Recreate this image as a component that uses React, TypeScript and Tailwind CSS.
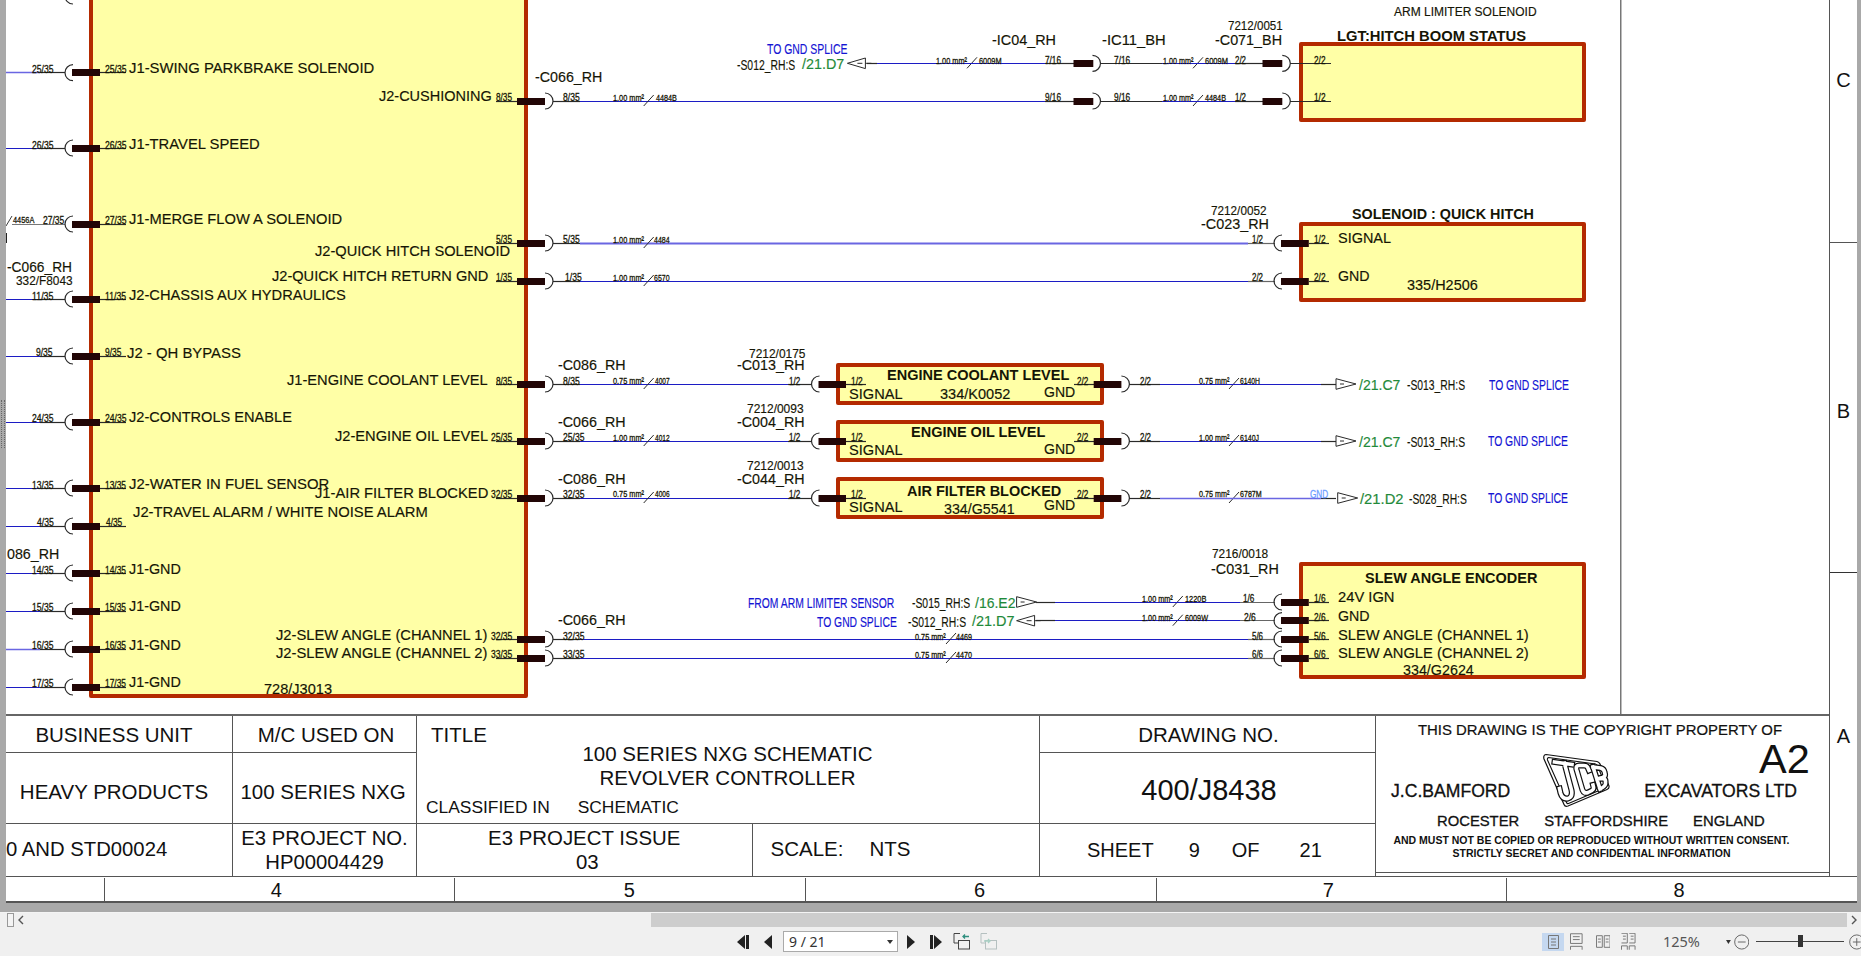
import React from "react";

const ctx = document.createElement("canvas").getContext("2d")!;
const BLUE = "#1c1cc4";
const SOFT = "#6a66e2";
const DARK = "#2a2a2a";
const GREEN = "#1f8a3a";
const TEXTBLUE = "#1414d4";

type Lab = [string, number, number, number, number, string?, boolean?];

function Label({ d }: { d: Lab }) {
  const [t, a, b, y, fs, c, bold] = d;
  ctx.font = `${bold ? "bold " : ""}${fs}px "Liberation Sans"`;
  const w = ctx.measureText(t).width || 1;
  const color = c || "#151505";
  return (
    <span
      className="absolute whitespace-nowrap leading-none origin-left"
      style={{
        left: a - 6,
        top: y - fs / 2,
        fontSize: fs,
        color,
        fontWeight: bold ? 700 : 400,
        transform: `scaleX(${(b - a) / w})`,
        WebkitTextStroke: bold ? undefined : `${fs < 12 ? 0.3 : 0.15}px ${color}`,
      }}
    >
      {t}
    </span>
  );
}

const P = 11;
const M = 9.5;
const T = 14;
const labels: Lab[] = [
  // left pins outer / inner
  ["25/35", 32.4, 53.8, 69.3, P], ["25/35", 105, 126.5, 69.3, P],
  ["26/35", 32.4, 53.8, 145, P], ["26/35", 105, 126.5, 145, P],
  ["27/35", 42.7, 64, 220, P], ["27/35", 105, 126.5, 220, P], ["4456A", 13.4, 34.8, 220, M],
  ["11/35", 32.4, 53.8, 296, P], ["11/35", 105, 126, 296, P],
  ["9/35", 35.6, 52.2, 352.3, P], ["9/35", 105, 121.4, 352.3, P],
  ["24/35", 32.4, 53.8, 418, P], ["24/35", 105, 126.5, 418, P],
  ["13/35", 32.4, 53.8, 485, P], ["13/35", 105, 126, 485, P],
  ["4/35", 37, 53.8, 522.3, P], ["4/35", 105.6, 121.8, 522.3, P],
  ["14/35", 32.4, 53.8, 570, P], ["14/35", 105, 126, 570, P],
  ["15/35", 32.4, 53.8, 607.3, P], ["15/35", 105, 126, 607.3, P],
  ["16/35", 32.4, 53.8, 645.3, P], ["16/35", 105, 126, 645.3, P],
  ["17/35", 32.4, 53.8, 683, P], ["17/35", 105, 126, 683, P],
  // main block left
  ["J1-SWING PARKBRAKE SOLENOID", 128.5, 373.7, 68.3, T],
  ["J1-TRAVEL SPEED", 128.5, 259.8, 144, T],
  ["J1-MERGE FLOW A SOLENOID", 128.5, 343.2, 219, T],
  ["J2-CHASSIS AUX HYDRAULICS", 128.5, 346, 295, T],
  ["J2 - QH BYPASS", 126.5, 240.4, 353, T],
  ["J2-CONTROLS ENABLE", 128.5, 291.4, 417, T],
  ["J2-WATER IN FUEL SENSOR", 128.5, 329.4, 484, T],
  ["J2-TRAVEL ALARM / WHITE NOISE ALARM", 132.5, 429.4, 512, T],
  ["J1-GND", 128.5, 180.3, 569.3, T],
  ["J1-GND", 128.5, 180.3, 606.3, T],
  ["J1-GND", 128.5, 180.3, 645, T],
  ["J1-GND", 128.5, 180.3, 682.3, T],
  // main block right
  ["J2-CUSHIONING", 378.8, 491.5, 96, T],
  ["J2-QUICK HITCH SOLENOID", 315, 510, 251, T],
  ["J2-QUICK HITCH RETURN GND", 272, 488.3, 276, T],
  ["J1-ENGINE COOLANT LEVEL", 287, 488, 380, T],
  ["J2-ENGINE OIL LEVEL", 334.5, 488.3, 436, T],
  ["J1-AIR FILTER BLOCKED", 315, 488.3, 493, T],
  ["J2-SLEW ANGLE (CHANNEL 1)", 275.6, 488.3, 635.3, T],
  ["J2-SLEW ANGLE (CHANNEL 2)", 275.6, 488.3, 653.3, T],
  ["728/J3013", 264, 332, 689, T],
  ["8/35", 496, 512, 97.3, P], ["5/35", 496, 512, 239, P], ["1/35", 496, 512, 277.3, P], ["8/35", 496, 512, 381, P],
  ["25/35", 490.7, 512, 437, P], ["32/35", 490.7, 512, 494, P], ["32/35", 490.7, 512, 636, P], ["33/35", 490.7, 512, 654, P],
  ["8/35", 563, 579.7, 97.3, P], ["5/35", 563, 579.7, 239, P], ["1/35", 564.6, 581.3, 277.3, P], ["8/35", 563, 579.7, 381, P],
  ["25/35", 563, 584.4, 437, P], ["32/35", 563, 584.4, 494.3, P], ["32/35", 563, 584.4, 636, P], ["33/35", 563, 584.4, 654, P],
  // connector names near block
  ["-C066_RH", 534.6, 602, 77.3, T],
  ["-C066_RH", 7, 72, 267.3, T],
  ["332/F8043", 15.8, 72.4, 281, 12.5],
  ["086_RH", 6.7, 59, 554.3, T],
  ["-C086_RH", 558.3, 626, 365.3, T],
  ["-C066_RH", 558.3, 626, 422, T],
  ["-C086_RH", 558.3, 626, 479, T],
  ["-C066_RH", 558.3, 626, 620, T],
  // row 63 / 101
  ["TO GND SPLICE", 767, 847.4, 49.3, T, TEXTBLUE],
  ["-S012_RH:S", 737, 795.2, 65.3, T],
  ["/21.D7", 802, 844.2, 64.3, 14.5, GREEN],
  ["1.00 mm²", 936, 967, 60.7, M], ["6009M", 979, 1001.6, 60.7, M],
  ["7/16", 1045, 1061, 60, P], ["7/16", 1114.3, 1130.5, 60, P],
  ["1.00 mm²", 1162.5, 1193, 60.7, M], ["6009M", 1205, 1228, 60.7, M], ["2/2", 1235, 1246, 60, P], ["2/2", 1314.3, 1325.8, 60, P],
  ["1.00 mm²", 613, 644, 97.3, M], ["4484B", 656.4, 677.3, 97.3, M],
  ["9/16", 1045, 1061, 97.3, P], ["9/16", 1114.3, 1130.5, 97.3, P],
  ["1.00 mm²", 1162.5, 1193, 97.3, M], ["4484B", 1205, 1226, 97.3, M], ["1/2", 1235, 1246, 97.3, P], ["1/2", 1314.3, 1325.8, 97.3, P],
  ["-IC04_RH", 991.7, 1055.7, 40.3, T], ["-IC11_BH", 1101.6, 1165.3, 40.3, T],
  ["7212/0051", 1228, 1282.7, 26, 12], ["-C071_BH", 1215, 1282, 40.3, T],
  ["ARM LIMITER SOLENOID", 1394, 1536.6, 12, 12],
  ["LGT:HITCH BOOM STATUS", 1337, 1526, 36, T, undefined, true],
  // quick hitch
  ["7212/0052", 1211, 1266.5, 211, 12], ["-C023_RH", 1200.5, 1268.5, 224.3, T],
  ["SOLENOID : QUICK HITCH", 1351.5, 1533.4, 214, T, undefined, true],
  ["1.00 mm²", 613, 644, 239.3, M], ["4484", 654, 669.5, 239.3, M],
  ["1.00 mm²", 613, 644, 277.7, M], ["6570", 654, 669.5, 277.7, M],
  ["1/2", 1252, 1263, 239.3, P], ["1/2", 1314.3, 1325.8, 239.3, P],
  ["2/2", 1252, 1263, 277.3, P], ["2/2", 1314.3, 1325.8, 277.3, P],
  ["SIGNAL", 1337.7, 1390.7, 238.3, T], ["GND", 1337.7, 1369.3, 276.3, T], ["335/H2506", 1406.5, 1477.3, 285.3, T],
  // coolant
  ["7212/0175", 748.5, 805, 354, 12], ["-C013_RH", 737.4, 805, 365.3, T],
  ["0.75 mm²", 613, 644, 381, M], ["4007", 654.8, 669.4, 381, M],
  ["1/2", 788.8, 800, 381, P], ["1/2", 851.3, 863, 381, P],
  ["ENGINE COOLANT LEVEL", 887.3, 1069.6, 375.3, T, undefined, true],
  ["SIGNAL", 848.5, 902, 394.3, T], ["334/K0052", 939.5, 1009.9, 394.3, T], ["GND", 1043.5, 1074.7, 392.3, T],
  ["2/2", 1076.7, 1088, 381, P], ["2/2", 1140, 1151, 381, P],
  ["0.75 mm²", 1199, 1229.3, 381, M], ["6140H", 1240, 1260, 381, M],
  ["/21.C7", 1358.6, 1400, 385.3, 14.5, GREEN], ["-S013_RH:S", 1406.5, 1464.6, 385, T], ["TO GND SPLICE", 1489, 1569, 385, T, TEXTBLUE],
  // oil
  ["7212/0093", 747.3, 803.9, 409, 12], ["-C004_RH", 737.4, 805, 422.3, T],
  ["1.00 mm²", 613, 644, 437.3, M], ["4012", 654.8, 669.4, 437.3, M],
  ["1/2", 788.8, 800, 437.3, P], ["1/2", 851.3, 863, 437.3, P],
  ["ENGINE OIL LEVEL", 911, 1045.5, 432.3, T, undefined, true],
  ["SIGNAL", 848.5, 902, 450.3, T], ["GND", 1043.5, 1074.7, 449.3, T],
  ["2/2", 1076.7, 1088, 437.3, P], ["2/2", 1140, 1151, 437.3, P],
  ["1.00 mm²", 1199, 1229.3, 437.3, M], ["6140J", 1240, 1259, 437.3, M],
  ["/21.C7", 1358.6, 1400, 442, 14.5, GREEN], ["-S013_RH:S", 1406.5, 1464.6, 442, T], ["TO GND SPLICE", 1488, 1568, 441, T, TEXTBLUE],
  // air filter
  ["7212/0013", 747.3, 803.9, 466, 12], ["-C044_RH", 737.4, 805, 479.3, T],
  ["0.75 mm²", 613, 644, 494, M], ["4006", 654.8, 669.4, 494, M],
  ["1/2", 788.8, 800, 494, P], ["1/2", 851.3, 863, 494, P],
  ["AIR FILTER BLOCKED", 907, 1061.3, 491.3, T, undefined, true],
  ["SIGNAL", 848.5, 902, 507.3, T], ["334/G5541", 944, 1014.6, 509.3, T], ["GND", 1043.5, 1074.7, 505.3, T],
  ["2/2", 1076.7, 1088, 494, P], ["2/2", 1140, 1151, 494, P],
  ["0.75 mm²", 1199, 1229.3, 494, M], ["6787M", 1240, 1261.7, 494, M],
  ["GND", 1310.4, 1328.6, 494.3, P, "#6d9eff"],
  ["/21.D2", 1359.8, 1403.3, 499, 14.5, GREEN], ["-S028_RH:S", 1408.8, 1466.6, 499, T], ["TO GND SPLICE", 1488, 1568, 498.3, T, TEXTBLUE],
  // encoder
  ["FROM ARM LIMITER SENSOR", 748, 894.8, 603.3, T, TEXTBLUE],
  ["-S015_RH:S", 911.8, 970, 602.7, T], ["/16.E2", 975, 1015.4, 603.3, 14.5, GREEN],
  ["TO GND SPLICE", 817, 896.8, 622.3, T, TEXTBLUE],
  ["-S012_RH:S", 907.5, 965.6, 621.7, T], ["/21.D7", 972, 1014.6, 621.7, 14.5, GREEN],
  ["1.00 mm²", 1142, 1172.8, 598.7, M], ["1220B", 1184.6, 1206, 598.7, M],
  ["1.00 mm²", 1142, 1172.8, 617.7, M], ["6009W", 1185.4, 1208.4, 617.7, M],
  ["0.75 mm²", 915.4, 946.2, 636.3, M], ["4469", 956, 972, 636.3, M],
  ["0.75 mm²", 915.4, 946.2, 654.7, M], ["4470", 956, 972, 654.7, M],
  ["7216/0018", 1212.3, 1268.5, 554, 12], ["-C031_RH", 1211, 1278.8, 569.3, T],
  ["1/6", 1243.2, 1254.6, 598.3, P], ["2/6", 1244, 1255.8, 617.3, P], ["5/6", 1252, 1263, 636, P], ["6/6", 1252, 1263, 654.3, P],
  ["1/6", 1314.3, 1325.8, 598.3, P], ["2/6", 1314.3, 1325.8, 617.3, P], ["5/6", 1314.3, 1325.8, 636, P], ["6/6", 1314.3, 1325.8, 654.3, P],
  ["SLEW ANGLE ENCODER", 1364.5, 1537.4, 578.3, T, undefined, true],
  ["24V IGN", 1337.7, 1394.2, 597.3, T], ["GND", 1337.7, 1369.3, 616.3, T],
  ["SLEW ANGLE (CHANNEL 1)", 1337.7, 1529.8, 635.3, T], ["SLEW ANGLE (CHANNEL 2)", 1337.7, 1529.8, 653.3, T],
  ["334/G2624", 1402.5, 1473.3, 670.3, T],
];

const boxes: [number, number, number, number][] = [
  [89, -10, 528, 697.7],
  [1298.5, 42.3, 1585.6, 122.3],
  [1298.5, 221.7, 1585.6, 301.7],
  [836, 363.3, 1104, 405.3],
  [836, 420, 1104, 462],
  [836, 476.7, 1104, 519],
  [1298.5, 561.7, 1585.6, 679.3],
];

const snap = (y: number) => Math.floor(y) + 0.5;

function H({ a, b, y, c, w = 1.2 }: { a: number; b: number; y: number; c: string; w?: number }) {
  return <line x1={a} x2={b} y1={snap(y)} y2={snap(y)} stroke={c} strokeWidth={w} />;
}

function Bar({ a, b, y }: { a: number; b: number; y: number }) {
  return <rect x={a} y={snap(y) - 3.5} width={b - a} height={7} fill="#220606" />;
}

function ArcL({ x, y }: { x: number; y: number }) {
  return <path d={`M${x} ${y - 8}A8 8 0 0 0 ${x} ${y + 8}`} fill="none" stroke={DARK} strokeWidth={1.2} />;
}

function ArcR({ x, y }: { x: number; y: number }) {
  return <path d={`M${x} ${y - 8}A8 8 0 0 1 ${x} ${y + 8}`} fill="none" stroke={DARK} strokeWidth={1.2} />;
}

function Tick({ x, y }: { x: number; y: number }) {
  return <line x1={x} x2={x + 10} y1={y + 5} y2={y - 6} stroke={DARK} strokeWidth={1} />;
}

function ArrowL({ x, y }: { x: number; y: number }) {
  return (
    <g fill="none" stroke={DARK} strokeWidth={1}>
      <path d={`M${x} ${y}L${x + 18} ${y - 5.3}V${y + 5.3}Z`} fill="#fff" />
      <path d={`M${x + 10} ${y}H${x + 15}M${x + 18} ${y}H${x + 24}`} />
    </g>
  );
}

function ArrowR({ x, y }: { x: number; y: number }) {
  return (
    <g fill="none" stroke={DARK} strokeWidth={1}>
      <path d={`M${x + 20} ${y}L${x} ${y - 5.3}V${y + 5.3}Z`} fill="#fff" />
      <path d={`M${x + 4} ${y}H${x + 8}`} />
    </g>
  );
}

const leftPins = [-4, 72.7, 148, 224, 299, 356, 422, 488, 526, 573, 611, 649, 687];
const softLeft = [72.7, 649];
const rightPins = [101, 243, 281, 384, 441, 498, 639, 658];
const midRows = [384, 441, 498];
const endPins = [243, 281, 602, 620.7, 639, 658];

function Wires() {
  return (
    <svg className="absolute inset-0 pointer-events-none" width={1823} height={715} viewBox="6 0 1823 715">
      <line x1={1620.8} x2={1620.8} y1={0} y2={715} stroke="#555" strokeWidth={1.2} />
      {leftPins.map((y) => {
        const soft = softLeft.includes(y);
        const longDark = y === 224;
        return (
          <g key={y}>
            {!longDark && <H a={6} b={40} y={y} c={soft ? SOFT : BLUE} w={soft ? 1.6 : 1.2} />}
            {longDark ? <H a={12} b={65} y={y} c="#777" /> : <H a={40} b={65} y={y} c={DARK} />}
            <H a={100} b={126} y={y} c={DARK} />
            <ArcL x={73} y={y} />
            <Bar a={72} b={100} y={y} />
          </g>
        );
      })}
      <line x1={6} x2={12} y1={226} y2={216} stroke={DARK} strokeWidth={0.9} />
      <rect x={6} y={233} width={1} height={10} fill="#222" />
      {rightPins.map((y) => {
        const soft = y === 243;
        return (
          <g key={y}>
            <H a={496} b={517} y={y} c={DARK} />
            <Bar a={517} b={545} y={y} />
            <ArcR x={545} y={y} />
            <H a={553} b={580} y={y} c={DARK} />
            <H a={580} b={y === 101 ? 1045 : midRows.includes(y) ? 788 : 1248} y={y} c={soft ? SOFT : BLUE} w={soft ? 1.8 : 1.2} />
          </g>
        );
      })}
      {[
        [643.7, 101], [643.7, 243], [643.7, 281], [643.7, 384], [643.7, 441], [643.7, 498],
        [967, 63.3], [1193, 63.3], [1193, 101], [1229, 384], [1229, 441], [1229, 498],
        [1172.8, 602], [1172.8, 620.7], [946, 639], [946, 658],
      ].map(([x, y]) => (
        <Tick key={`${x}-${y}`} x={x} y={y} />
      ))}
      {[63.3, 101].map((y) => (
        <g key={y}>
          <H a={1045} b={1074} y={y} c={DARK} />
          <Bar a={1073.5} b={1093.3} y={y} />
          <ArcR x={1092.5} y={y} />
          <H a={1100} b={1162} y={y} c={DARK} />
          <H a={1162} b={1235} y={y} c={BLUE} />
          <H a={1235} b={1263} y={y} c={DARK} />
          <Bar a={1262.5} b={1282.3} y={y} />
          <ArcR x={1282.3} y={y} />
          <H a={1290} b={1331} y={y} c={DARK} />
        </g>
      ))}
      <H a={867} b={877} y={63.3} c={DARK} />
      <H a={877} b={1045} y={63.3} c={BLUE} />
      <ArrowL x={847.4} y={63.3} />
      {midRows.map((y) => (
        <g key={y}>
          <H a={788} b={812} y={y} c={DARK} />
          <ArcL x={819.5} y={y} />
          <Bar a={818.5} b={846} y={y} />
          <H a={846} b={866} y={y} c={DARK} />
          <H a={1074} b={1094} y={y} c={DARK} />
          <Bar a={1093.7} b={1121.4} y={y} />
          <ArcR x={1121.4} y={y} />
          <H a={1129} b={1160} y={y} c={DARK} />
          <H a={1160} b={1321} y={y} c={y === 498 ? SOFT : BLUE} w={y === 498 ? 1.6 : 1.2} />
          <H a={1321} b={1336} y={y} c={DARK} />
          <ArrowR x={y === 498 ? 1337.7 : 1336} y={y} />
        </g>
      ))}
      {[602, 620.7].map((y) => (
        <g key={y}>
          <H a={1036} b={1055} y={y} c={DARK} />
          <H a={1055} b={1240} y={y} c={BLUE} />
        </g>
      ))}
      <ArrowR x={1016.6} y={602} />
      <ArrowL x={1016.6} y={620.7} />
      {endPins.map((y) => (
        <g key={y}>
          <H a={y === 602 || y === 620.7 ? 1240 : 1248} b={1275} y={y} c="#666" />
          <ArcL x={1282} y={y} />
          <Bar a={1281} b={1308.8} y={y} />
          <H a={1309} b={1329} y={y} c={DARK} />
        </g>
      ))}
    </svg>
  );
}

function Schematic() {
  return (
    <div className="relative h-[714px] overflow-hidden">
      {boxes.map(([a, t, b, o]) => (
        <div
          key={`${a}-${t}`}
          className="absolute box-border border-[4.5px] border-[#b42a00] bg-[#ffffa6] rounded-[2px]"
          style={{ left: a - 6, top: t, width: b - a, height: o - t }}
        />
      ))}
      <Wires />
      {labels.map((d, i) => (
        <Label key={i} d={d} />
      ))}
    </div>
  );
}

const LOGO_LETTERS =
  "M11.5 9L29 11.5M21.5 10.5L28.5 37Q30 44 25 45.5Q19.5 46.5 17.5 40L16.5 35.5" +
  "M46 17.5L44.5 14Q43.5 12.5 41 12.5L36 12.5Q32.5 12.5 33.5 16.5L39.5 37Q41 41 45 39.5L49 37.5Q51 36.5 50.5 34L50 32" +
  "M50 14L57 36M50 14L57.5 15Q61 16 61.5 19L62 21Q62.5 23.5 59.5 24.5L54 26M54 26L60 25.5Q63 26 62.5 29.5L62.5 31Q62 33.5 57 36";

function JcbLogo() {
  return (
    <svg className="absolute left-[167px] top-[37px]" width={67} height={55} viewBox="0 0 67 55">
      <path d="M3 1.5L54 8.5Q56 9 57 11L66 33Q66.5 35.5 64 36.5L25 53Q22 54 21 51.5L1 6Q0 2 3 1.5Z" fill="#fff" stroke="#111" strokeWidth={1.2} />
      <path d="M5.5 4.5L52.5 11Q54 11.5 54.5 13L63 33Q63.5 34.5 62 35L25.5 50.5Q24 51 23.5 49.5L4.5 7Q4 5 5.5 4.5Z" fill="none" stroke="#111" strokeWidth={1.1} />
      <path d={LOGO_LETTERS} fill="none" stroke="#111" strokeWidth={6} strokeLinecap="square" strokeLinejoin="round" />
      <path d={LOGO_LETTERS} fill="none" stroke="#fff" strokeWidth={3.6} strokeLinecap="square" strokeLinejoin="round" />
    </svg>
  );
}

function TitleBlock() {
  return (
    <div className="grid grid-cols-[227px_184px_335.5px_287.5px_336px_453px] grid-rows-[37px_70.5px_52.5px] h-[162px] border-t-2 border-[#666] text-[#111]">
      <div className="flex items-center justify-center border-r border-b border-[#555] pr-[10px] pt-[3px] text-[20.5px]">BUSINESS UNIT</div>
      <div className="flex items-center justify-center border-r border-b border-[#555] pl-[3px] pt-[3px] text-[20.5px]">M/C USED ON</div>
      <div className="relative col-span-2 row-span-2 border-r border-b border-[#555] flex flex-col">
        <div className="pl-[14px] pt-[2px] h-[37px] flex items-center text-[20.5px]">TITLE</div>
        <div className="absolute left-0 right-0 top-[26px] flex flex-col items-center pr-[1px] text-[20.5px] leading-[24px]">
          <span>100 SERIES NXG SCHEMATIC</span>
          <span>REVOLVER CONTROLLER</span>
        </div>
        <div className="mt-auto pb-[6px] pl-[9px] flex gap-[28px] text-[17.4px] leading-[20px]">
          <span>CLASSIFIED IN</span>
          <span>SCHEMATIC</span>
        </div>
      </div>
      <div className="flex items-center justify-center border-r border-b border-[#555] pl-[2px] pt-[2px] text-[20.5px]">DRAWING NO.</div>
      <div className="relative col-start-6 row-start-1 row-span-3 border-b border-[#555] h-[157px]">
        <div className="flex flex-col items-center h-full">
          <div className="mt-[4px] pr-[5px] leading-[20px] text-[14.9px] [-webkit-text-stroke:0.2px_#111]">THIS DRAWING IS THE COPYRIGHT PROPERTY OF</div>
          <div className="mt-[41px] w-full flex justify-between pl-[15px] pr-[32px] leading-[20px] text-[17.6px] [-webkit-text-stroke:0.3px_#111]">
            <span>J.C.BAMFORD</span>
            <span>EXCAVATORS LTD</span>
          </div>
          <div className="mt-[10px] w-full flex pl-[61px] gap-[25px] leading-[20px] text-[14.8px] [-webkit-text-stroke:0.3px_#111]">
            <span>ROCESTER</span>
            <span>STAFFORDSHIRE</span>
            <span>ENGLAND</span>
          </div>
          <div className="mt-[2px] pr-[22px] leading-[14px] text-[10.5px] font-bold">AND MUST NOT BE COPIED OR REPRODUCED WITHOUT WRITTEN CONSENT.</div>
          <div className="pr-[22px] leading-[13px] text-[10.5px] font-bold">STRICTLY SECRET AND CONFIDENTIAL INFORMATION</div>
        </div>
        <JcbLogo />
        <span className="absolute left-[383px] top-[20px] text-[41.5px] leading-[46px]">A2</span>
      </div>
      <div className="flex items-center justify-center border-r border-b border-[#555] pr-[10px] pt-[9px] text-[20.5px]">HEAVY PRODUCTS</div>
      <div className="flex items-center justify-center border-r border-b border-[#555] pr-[3px] pt-[9px] text-[20.5px]">100 SERIES NXG</div>
      <div className="flex items-center justify-center border-r border-b border-[#555] pl-[3px] pt-[5px] text-[29px]">400/J8438</div>
      <div className="flex items-center overflow-hidden border-r border-[#555] pb-[1px] text-[20.3px]">0 AND STD00024</div>
      <div className="flex flex-col items-center justify-center border-r border-[#555] pt-[1px] text-[20.3px] leading-[24px]">
        <span>E3 PROJECT NO.</span>
        <span>HP00004429</span>
      </div>
      <div className="flex flex-col items-center justify-center border-r border-[#555] pt-[1px] text-[20.4px] leading-[24px]">
        <span>E3 PROJECT ISSUE</span>
        <span className="pl-[6px]">03</span>
      </div>
      <div className="flex items-center border-r border-[#555] pl-[18px] gap-[26px] text-[20.5px]">
        <span>SCALE:</span>
        <span>NTS</span>
      </div>
      <div className="flex items-center border-r border-[#555] pl-[47px] text-[20px]">
        <span>SHEET</span>
        <span className="ml-[35px]">9</span>
        <span className="ml-[32px]">OF</span>
        <span className="ml-[40px]">21</span>
      </div>
    </div>
  );
}

function Margin() {
  return (
    <div className="flex w-[28px] flex-col border-l border-[#555] text-center text-[20px] leading-[24px] text-[#111]">
      <div className="h-[243px] border-b border-[#555] pt-[68px]">C</div>
      <div className="h-[330px] border-b border-[#333] pt-[156px]">B</div>
      <div className="flex-1 pt-[151px]">A</div>
    </div>
  );
}

function Ruler() {
  return (
    <div className="flex h-[27px] border-b-2 border-t border-[#555] pt-[1px] text-[20px] text-[#111]">
      <div className="w-[98.5px] border-r border-[#555]" />
      <div className="flex w-[350.5px] items-center justify-center border-r border-[#555] pr-[6px]">4</div>
      <div className="flex w-[350.5px] items-center justify-center border-r border-[#555] pr-[1px]">5</div>
      <div className="flex w-[351px] items-center justify-center border-r border-[#555] pr-[2px]">6</div>
      <div className="flex w-[350.5px] items-center justify-center border-r border-[#555] pr-[6px]">7</div>
      <div className="flex flex-1 items-center justify-center pr-[6px]">8</div>
    </div>
  );
}

function Scrollbar() {
  return (
    <div className="flex h-[14px] items-stretch bg-[#f0f0f0]">
      <div className="ml-[7px] w-[7px] border border-[#999] bg-[#f4f4f4]" />
      <div className="flex w-[14px] items-center justify-center">
        <svg width={8} height={10} viewBox="0 0 8 10">
          <path d="M6 1L2 5L6 9" fill="none" stroke="#555" strokeWidth={1.4} />
        </svg>
      </div>
      <div className="ml-[623px] w-[1196px] bg-[#cdcdcd]" />
      <div className="flex flex-1 items-center justify-center">
        <svg width={8} height={10} viewBox="0 0 8 10">
          <path d="M2 1L6 5L2 9" fill="none" stroke="#555" strokeWidth={1.4} />
        </svg>
      </div>
    </div>
  );
}

function NavBtn({ d, w }: { d: string; w: number }) {
  return (
    <svg width={w} height={14} viewBox={`0 0 ${w} 14`}>
      <path d={d} fill="#222" />
    </svg>
  );
}

function PageSwap({ faded }: { faded?: boolean }) {
  const line = faded ? "#b5c0c0" : "#444";
  const arrow = faded ? "#a8d0c4" : "#2f8f7f";
  return (
    <svg width={18} height={17} viewBox="0 0 18 17">
      <path d="M1 .5H7M1 .5V10H5" fill="none" stroke={line} />
      <rect x={5.5} y={7.5} width={11} height={8.5} fill="none" stroke={line} />
      <path d={faded ? "M4 8H10M8 6L10 8L8 10" : "M16 3.5H10M12 1.5L10 3.5L12 5.5"} fill="none" stroke={arrow} strokeWidth={1.3} />
    </svg>
  );
}

function Toolbar() {
  return (
    <div className="flex h-[29px] items-center bg-[#f0f0f0] text-[#333]">
      <div className="ml-[737px] flex items-center">
        <NavBtn w={12} d="M8 0V14L0 7ZM9 0H12V14H9Z" />
        <div className="ml-[15px]">
          <NavBtn w={8} d="M8 0V14L0 7Z" />
        </div>
        <div className="ml-[11px] flex h-[21px] w-[115px] items-center justify-between border border-[#aaa] bg-white pl-[5px] pr-[4px] font-['Noto_Sans',sans-serif] text-[14px] leading-none">
          <span>9 / 21</span>
          <svg width={6} height={4} viewBox="0 0 6 4">
            <path d="M0 0H6L3 4Z" fill="#333" />
          </svg>
        </div>
        <div className="ml-[9px]">
          <NavBtn w={8} d="M0 0V14L8 7Z" />
        </div>
        <div className="ml-[15px]">
          <NavBtn w={12} d="M0 0H3V14H0ZM4 0V14L12 7Z" />
        </div>
        <div className="ml-[11px] flex">
          <PageSwap />
        </div>
        <div className="ml-[9px] flex">
          <PageSwap faded />
        </div>
      </div>
      <div className="ml-[544px] flex h-[18px] w-[23px] items-center justify-center bg-[#c5d8f0]">
        <svg width={11} height={14} viewBox="0 0 11 14">
          <path d="M.5.5H10.5V13.5H.5ZM3 4H8M3 7H8M3 10H8" fill="none" stroke="#777" />
        </svg>
      </div>
      <svg className="ml-[6px]" width={13} height={17} viewBox="0 0 13 17">
        <path d="M.5.5H12.5V10.5H.5ZM3 3.5H10M3 6.5H10M.5 17V13.5H12.5V17" fill="none" stroke="#777" />
      </svg>
      <svg className="ml-[13px]" width={15} height={13} viewBox="0 0 15 13">
        <path d="M.5.5H6.5V12.5H.5ZM8.5.5H14.5V12.5H8.5ZM2 4H5M2 7H5M10 4H13M10 7H13" fill="none" stroke="#777" />
      </svg>
      <svg className="ml-[11px]" width={15} height={17} viewBox="0 0 15 17">
        <path d="M.5 0H6.5V10H.5M8.5 0H14.5V10H8.5M.5 17V13H6.5V17M8.5 17V13H14.5V17M2 3H5M2 6H5M10 3H13M10 6H13" fill="none" stroke="#777" />
      </svg>
      <span className="ml-[27px] font-['Noto_Sans',sans-serif] text-[14.5px] leading-none text-[#555]">125%</span>
      <svg className="ml-[26px]" width={5} height={4} viewBox="0 0 5 4">
        <path d="M0 0H5L2.5 4Z" fill="#333" />
      </svg>
      <svg className="ml-[3px]" width={16} height={16} viewBox="0 0 16 16">
        <circle cx={8} cy={8} r={7.3} fill="none" stroke="#666" />
        <path d="M4 8H12" stroke="#666" />
      </svg>
      <div className="relative ml-[7px] h-px w-[91px] bg-[#444]">
        <div className="absolute left-[42px] top-[-6px] h-[12px] w-[5px] bg-[#333]" />
      </div>
      <svg className="ml-[5px]" width={12} height={16} viewBox="0 0 12 16">
        <circle cx={8} cy={8} r={7.3} fill="none" stroke="#666" />
        <path d="M4 8H12M8 4V12" stroke="#666" />
      </svg>
    </div>
  );
}

export default function App() {
  return (
    <div className="flex h-[956px] w-[1861px] flex-col overflow-hidden bg-[#f0f0f0] font-['Liberation_Sans',Arial,sans-serif]">
      <div className="relative flex h-[913px] border-b border-[#f4f4f4] bg-[#a9a9a9] pb-[9px] pl-[6px] pr-[4px]">
        <div className="absolute left-[1px] top-[400px] h-[48px] w-[4px] border-x border-dotted border-[#666]" />
        <div className="flex flex-1 flex-col bg-white">
          <div className="flex h-[876px]">
            <div className="w-[1823px]">
              <Schematic />
              <TitleBlock />
            </div>
            <Margin />
          </div>
          <Ruler />
        </div>
      </div>
      <Scrollbar />
      <Toolbar />
    </div>
  );
}
